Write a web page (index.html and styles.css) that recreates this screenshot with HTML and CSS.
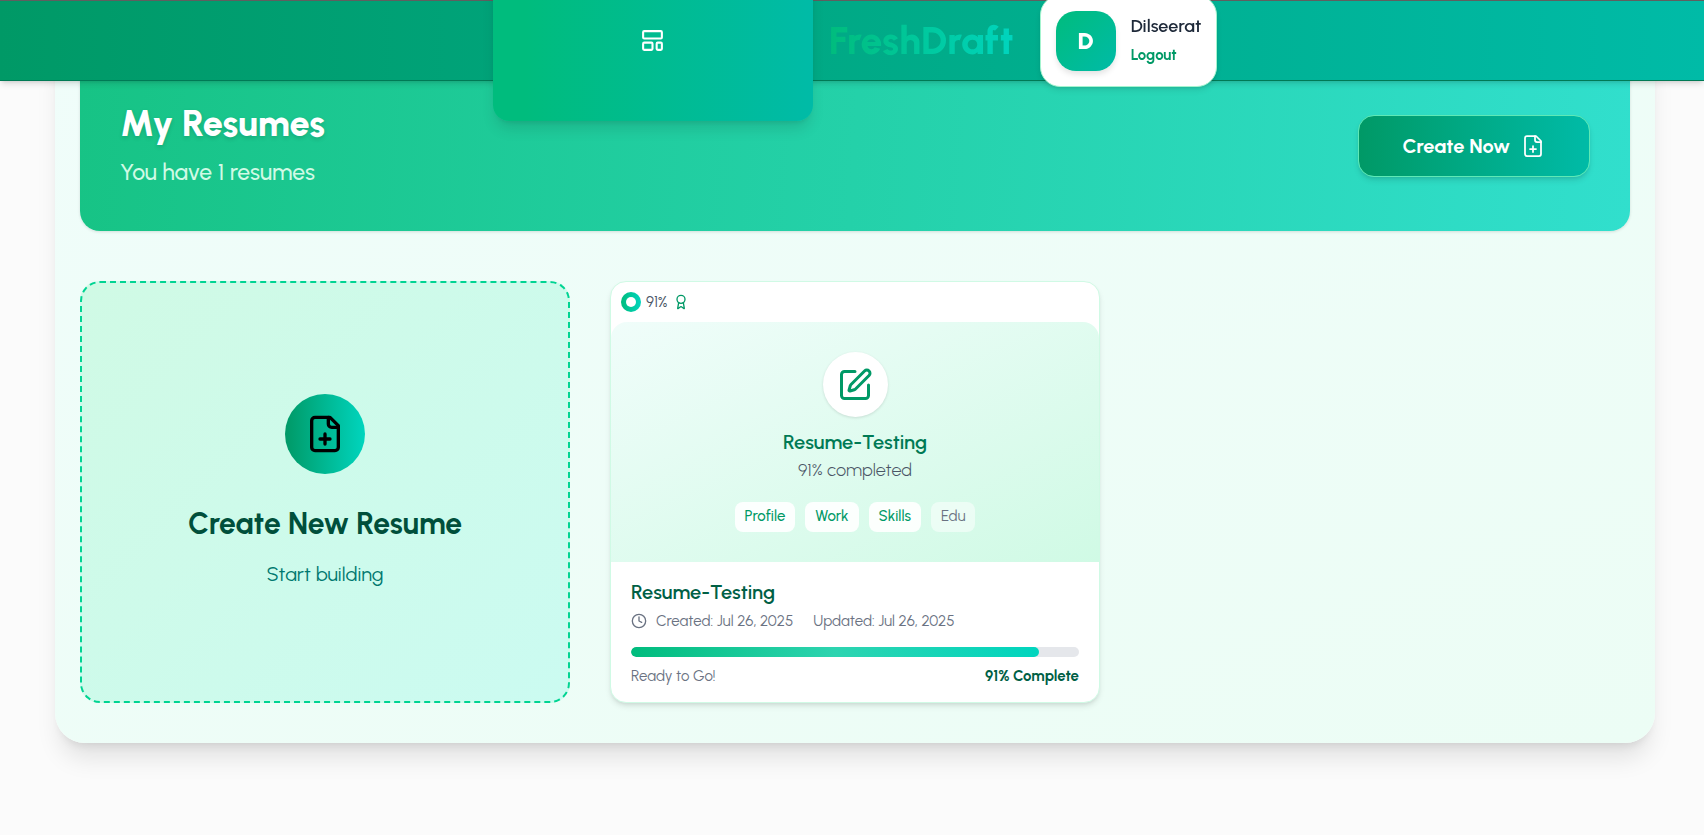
FILE: index.html
```html
<!DOCTYPE html>
<html lang="en">
<head>
<meta charset="utf-8">
<meta name="viewport" content="width=device-width, initial-scale=1">
<title>FreshDraft – My Resumes</title>
<link rel="stylesheet" href="styles.css">
</head>
<body>
<header class="navbar">
  <a class="brand" href="#" aria-label="FreshDraft home">
    <span class="brand-tile">
      <svg class="icon icon-md" viewBox="0 0 24 24" aria-hidden="true"><rect width="18" height="7" x="3" y="3" rx="1"/><rect width="9" height="7" x="3" y="14" rx="1"/><rect width="5" height="7" x="16" y="14" rx="1"/></svg>
    </span>
    <span class="brand-name">FreshDraft</span>
  </a>
  <div class="user-card">
    <div class="avatar">D</div>
    <div class="user-info">
      <span class="user-name">Dilseerat</span>
      <button class="logout" type="button">Logout</button>
    </div>
  </div>
</header>

<main class="page">
  <section class="panel">
    <div class="banner">
      <div>
        <h1 class="banner-title">My Resumes</h1>
        <p class="banner-subtitle">You have 1 resumes</p>
      </div>
      <button class="create-now" type="button">
        Create Now
        <svg class="icon icon-thin" viewBox="0 0 24 24" aria-hidden="true"><path d="M15 2H6a2 2 0 0 0-2 2v16a2 2 0 0 0 2 2h12a2 2 0 0 0 2-2V7Z"/><path d="M14 2v4a2 2 0 0 0 2 2h4"/><path d="M9 15h6"/><path d="M12 18v-6"/></svg>
      </button>
    </div>

    <div class="grid">
      <button class="new-card" type="button">
        <span class="new-icon">
          <svg class="icon icon-xl" viewBox="0 0 24 24" aria-hidden="true"><path d="M15 2H6a2 2 0 0 0-2 2v16a2 2 0 0 0 2 2h12a2 2 0 0 0 2-2V7Z"/><path d="M14 2v4a2 2 0 0 0 2 2h4"/><path d="M9 15h6"/><path d="M12 18v-6"/></svg>
        </span>
        <span class="new-title">Create New Resume</span>
        <span class="new-text">Start building</span>
      </button>

      <article class="resume-card">
        <div class="score">
          <span class="ring"></span>
          <span>91%</span>
          <svg class="icon icon-sm award" viewBox="0 0 24 24" aria-hidden="true"><path d="m15.477 12.89 1.515 8.526a.5.5 0 0 1-.81.47l-3.58-2.687a1 1 0 0 0-1.197 0l-3.586 2.686a.5.5 0 0 1-.81-.469l1.514-8.526"/><circle cx="12" cy="8" r="6"/></svg>
        </div>
        <div class="preview">
          <div class="preview-icon">
            <svg class="icon icon-lg" viewBox="0 0 24 24" aria-hidden="true"><path d="M12 3H5a2 2 0 0 0-2 2v14a2 2 0 0 0 2 2h14a2 2 0 0 0 2-2v-7"/><path d="M18.375 2.625a1 1 0 0 1 3 3l-9.013 9.014a2 2 0 0 1-.853.505l-2.873.84a.5.5 0 0 1-.62-.62l.84-2.873a2 2 0 0 1 .506-.852z"/></svg>
          </div>
          <h2 class="preview-title">Resume-Testing</h2>
          <p class="preview-text">91% completed</p>
          <ul class="chips">
            <li class="chip">Profile</li>
            <li class="chip">Work</li>
            <li class="chip">Skills</li>
            <li class="chip chip-off">Edu</li>
          </ul>
        </div>
        <div class="details">
          <h3 class="details-title">Resume-Testing</h3>
          <div class="dates">
            <svg class="icon icon-sm clock" viewBox="0 0 24 24" aria-hidden="true"><circle cx="12" cy="12" r="10"/><path d="M12 6v6l4 2"/></svg>
            <span>Created: Jul 26, 2025</span>
            <span class="updated">Updated: Jul 26, 2025</span>
          </div>
          <div class="track"><div class="fill" style="width: 91%"></div></div>
          <div class="status">
            <span>Ready to Go!</span>
            <strong class="complete">91% Complete</strong>
          </div>
        </div>
      </article>
    </div>
  </section>
</main>
</body>
</html>
```
FILE: styles.css
```css
* { box-sizing: border-box; }

body {
  margin: 0;
  background: #fbfbfb;
  font-family: "Urbanist", Lato, "Open Sans", sans-serif;
}

h1, h2, h3, p, ul { margin: 0; padding: 0; }

button { font: inherit; cursor: pointer; }

.icon {
  display: block;
  flex: none;
  width: 24px;
  height: 24px;
  fill: none;
  stroke: currentColor;
  stroke-width: 2;
  stroke-linecap: round;
  stroke-linejoin: round;
}
.icon-thin { stroke-width: 1.75; }
.icon-sm { width: 16px; height: 16px; }
.icon-md { width: 25px; height: 25px; }
.icon-lg { width: 36px; height: 36px; }
.icon-xl { width: 40px; height: 40px; }

/* Top bar */
.navbar {
  position: fixed;
  inset: 0 0 auto;
  z-index: 10;
  display: flex;
  align-items: center;
  justify-content: center;
  gap: 26px;
  height: 81px;
  padding-left: 6px;
  border-top: 1px solid #5f5f5f;
  border-bottom: 1px solid #007a55;
  background: linear-gradient(to right, #009966, #00bba7);
  box-shadow: 0 4px 6px -1px rgba(0, 0, 0, .12), 0 2px 4px -2px rgba(0, 0, 0, .12);
  clip-path: inset(0 0 -60px);
}
.brand {
  display: flex;
  align-items: center;
  gap: 16px;
  text-decoration: none;
}
.brand-tile {
  display: grid;
  place-items: center;
  width: 320px;
  height: 160px;
  border-radius: 16px;
  background: linear-gradient(to right, #00bc7d 10%, #00bba7);
  color: #fff;
  box-shadow: 0 10px 15px -3px rgba(0, 0, 0, .12), 0 4px 6px -4px rgba(0, 0, 0, .12);
}
.brand-name {
  background: linear-gradient(to right, #00bc7d, #00d5be);
  background-clip: text;
  color: transparent;
  font-size: 39px;
  line-height: 48px;
  font-weight: 800;
}
.user-card {
  display: flex;
  align-items: center;
  gap: 15px;
  padding: 15px;
  border: 1px solid #a4f4cf;
  border-radius: 20px;
  background: #fff;
  box-shadow: 0 4px 6px -1px rgba(0, 0, 0, .1), 0 2px 4px -2px rgba(0, 0, 0, .1);
}
.avatar {
  display: grid;
  place-items: center;
  width: 60px;
  height: 60px;
  border-radius: 20px;
  background: linear-gradient(135deg, #00bc7d, #00bba7);
  color: #fff;
  font-size: 24px;
  font-weight: 900;
  box-shadow: 0 4px 6px -1px rgba(0, 0, 0, .12);
}
.user-info {
  display: flex;
  flex-direction: column;
  align-items: flex-start;
  gap: 4px;
  padding-bottom: 2px;
}
.user-name {
  color: #1e2939;
  font-size: 18px;
  line-height: 26px;
  font-weight: 600;
}
.logout {
  padding: 0;
  border: 0;
  background: none;
  color: #009966;
  font-size: 15px;
  line-height: 24px;
  font-weight: 700;
}

/* Dashboard panel */
.page { padding: 36px 49px 92px 55px; }
.panel {
  max-width: 1600px;
  margin: 0 auto;
  padding: 25px 25px 40px;
  border-radius: 30px;
  background: linear-gradient(160deg, #f0fdfa, #ecfdf5);
  box-shadow: 0 20px 25px -5px rgba(0, 0, 0, .1), 0 8px 10px -6px rgba(0, 0, 0, .1);
}
.banner {
  display: flex;
  align-items: center;
  justify-content: space-between;
  padding: 40px;
  border-radius: 20px;
  background: linear-gradient(94deg, #17c385, #31dfcd);
  box-shadow: 0 1px 3px rgba(0, 0, 0, .12);
}
.banner-title {
  color: #fff;
  font-size: 36px;
  line-height: 46px;
  font-weight: 800;
  text-shadow: 0 2px 4px rgba(0, 0, 0, .15);
}
.banner-subtitle {
  margin-top: 8px;
  padding-bottom: 2px;
  color: #d0fae5;
  font-size: 23px;
  line-height: 34px;
  font-weight: 500;
}
.create-now {
  display: flex;
  align-items: center;
  gap: 11px;
  padding: 18px 44px;
  border: 1px solid #5ee9b5;
  border-radius: 16px;
  background: linear-gradient(to right, #009966, #00bba7);
  color: #fff;
  font-size: 20px;
  line-height: 24px;
  font-weight: 700;
  box-shadow: 0 4px 6px -1px rgba(0, 0, 0, .12), 0 2px 4px -2px rgba(0, 0, 0, .12);
}

/* Cards */
.grid {
  display: grid;
  grid-template-columns: repeat(3, minmax(0, 1fr));
  gap: 40px;
  margin-top: 50px;
}
.new-card {
  display: flex;
  flex-direction: column;
  align-items: center;
  justify-content: center;
  padding: 0 0 2px;
  border: 2px dashed #00d492;
  border-radius: 20px;
  background: linear-gradient(135deg, #d0fae5, #cbfbf1);
}
.new-icon {
  display: grid;
  place-items: center;
  width: 80px;
  height: 80px;
  margin-bottom: 30px;
  border-radius: 50%;
  background: linear-gradient(to right, #009966, #00d5be);
  color: #000;
}
.new-title {
  color: #004f3b;
  font-size: 30px;
  line-height: 40px;
  font-weight: 700;
}
.new-text {
  margin-top: 15px;
  color: #00786f;
  font-size: 20px;
  line-height: 30px;
}

.resume-card {
  overflow: hidden;
  border: 1px solid #d0fae5;
  border-radius: 16px;
  background: #fff;
  box-shadow: 0 4px 6px -1px rgba(0, 0, 0, .1), 0 2px 4px -2px rgba(0, 0, 0, .1);
}
.score {
  display: flex;
  align-items: center;
  gap: 5px;
  height: 40px;
  padding: 0 10px 1px;
  color: #4a5565;
  font-size: 15px;
}
.ring {
  width: 20px;
  height: 20px;
  border: 5px solid transparent;
  border-radius: 50%;
  background: linear-gradient(#fff, #fff) padding-box, linear-gradient(to right, #00bc7d, #00d5be) border-box;
}
.award { color: #009966; }
.preview {
  display: flex;
  flex-direction: column;
  align-items: center;
  padding: 30px 20px;
  border-radius: 16px 16px 0 0;
  background: linear-gradient(155deg, #f0fdfa, #d0fae5);
}
.preview-icon {
  display: grid;
  place-items: center;
  width: 65px;
  height: 65px;
  border-radius: 50%;
  background: #fff;
  color: #009966;
  box-shadow: 0 1px 3px rgba(0, 0, 0, .12);
}
.preview-title {
  margin-top: 11px;
  color: #007a55;
  font-size: 20px;
  line-height: 28px;
  font-weight: 600;
}
.preview-text {
  margin-top: 1px;
  color: #4a5565;
  font-size: 18px;
  line-height: 26px;
  font-weight: 300;
}
.chips {
  display: flex;
  gap: 10px;
  margin-top: 19px;
  list-style: none;
}
.chip {
  padding: 0 10px 2px;
  border-radius: 8px;
  background: rgba(255, 255, 255, .9);
  color: #009966;
  font-size: 15px;
  line-height: 28px;
  font-weight: 500;
}
.chip-off {
  background: rgba(255, 255, 255, .5);
  color: #6a7282;
  font-weight: 400;
}
.details {
  padding: 16px 20px 15px;
  color: #6a7282;
  font-size: 15px;
}
.details-title {
  color: #006045;
  font-size: 20px;
  line-height: 28px;
  font-weight: 600;
}
.dates {
  display: flex;
  align-items: center;
  gap: 9px;
  margin-top: 3px;
  line-height: 24px;
}
.updated { margin-left: 11px; }
.track {
  height: 10px;
  margin-top: 14px;
  overflow: hidden;
  border-radius: 5px;
  background: #e5e7eb;
}
.fill {
  height: 100%;
  border-radius: 5px;
  background: linear-gradient(to right, #00bc7d, #2dd4b0 50%, #00d5be);
}
.status {
  display: flex;
  justify-content: space-between;
  margin-top: 8px;
  line-height: 22px;
}
.complete { color: #006045; }
```
